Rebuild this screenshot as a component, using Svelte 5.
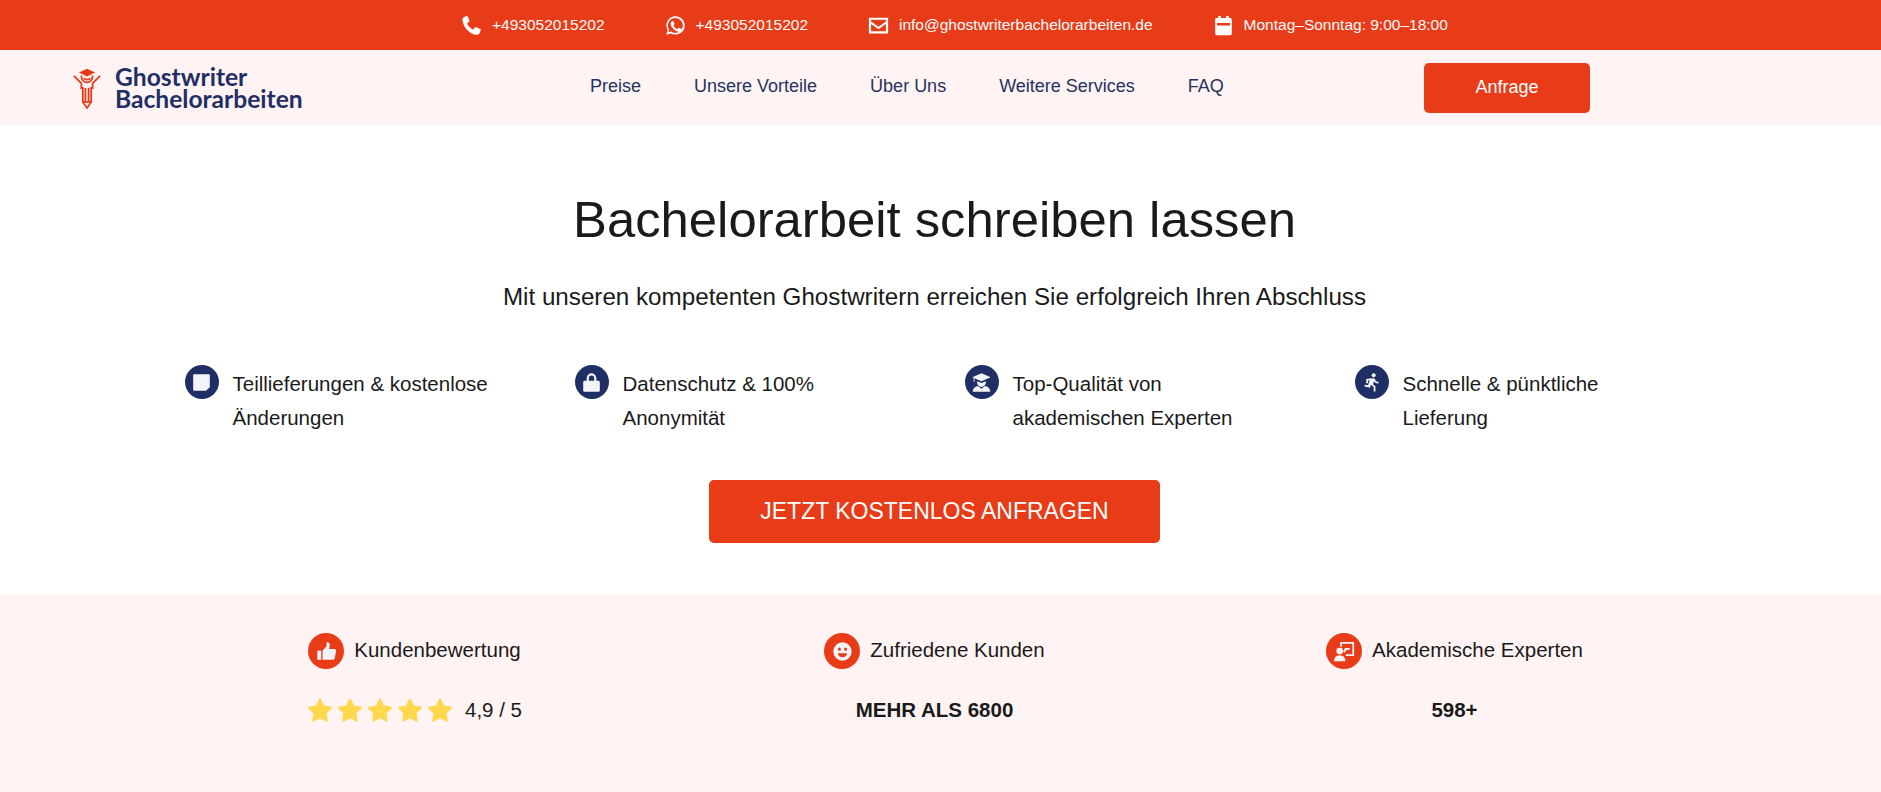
<script>
  const links = ['Preise', 'Unsere Vorteile', 'Über Uns', 'Weitere Services', 'FAQ'];
</script>

<div class="topbar">
  <div class="contact">
    <svg viewBox="0 0 24 24"><path d="M6.600 1 3 2.500C1.500 3.500 1.500 6 2 8c1.500 6.500 7.500 13 14 14.500 2 .5 4 0 5-1.500l1.500-3.500c.2-.6 0-1.200-.6-1.500l-4.600-2c-.5-.2-1.100-.1-1.500.4l-2 2.400c-3-1.500-5.600-4.200-7-7.100l2.400-2c.5-.4.600-1 .4-1.500l-2-4.600C7.800 1 7.200.8 6.600 1z" /></svg>
    <span>+493052015202</span>
  </div>
  <div class="contact">
    <svg viewBox="0 0 24 24"><path fill-rule="evenodd" d="M12 1.500A10.400 10.400 0 0 0 3 17.100L1.500 22.500l5.600-1.500A10.400 10.400 0 1 0 12 1.500zm0 2a8.400 8.400 0 1 1-4.500 15.500l-.4-.2-3 .8.800-2.900-.3-.4A8.400 8.400 0 0 1 12 3.500z" /><path d="M8.700 6.900c-.3 0-.7.100-1 .5-.4.400-1.200 1.200-1.200 2.800s1.200 3.200 1.400 3.400c.2.200 2.400 3.700 5.800 5 2.800 1.100 3.400.5 4-.1.400-.3 1-1.300 1.100-2 .1-.5 0-.7-.2-.8l-2.400-1.200c-.3-.1-.5-.1-.7.200l-1 1.200c-.2.200-.4.300-.7.100-1.900-.8-3.200-2.200-4-3.700-.2-.3 0-.5.100-.6l.8-1.100c.1-.2.100-.4 0-.6L9.600 7.500c-.3-.6-.6-.6-.9-.6z" /></svg>
    <span>+493052015202</span>
  </div>
  <div class="contact">
    <svg viewBox="0 0 24 24"><path fill-rule="evenodd" d="M1 3h22v18H1zm2.500 2.500v1.800l8.500 6 8.500-6V5.500zm17 4.800-8.500 6-8.500-6v8.200h17z" /></svg>
    <span>info@ghostwriterbachelorarbeiten.de</span>
  </div>
  <div class="contact">
    <svg viewBox="0 0 24 24"><path fill-rule="evenodd" d="M6 1h3v2.500h6V1h3v2.500h1.500c1 0 2 1 2 2V21c0 1-1 2-2 2h-15c-1 0-2-1-2-2V5.500c0-1 1-2 2-2H6zM4.500 9v3h15V9z" /></svg>
    <span>Montag–Sonntag: 9:00–18:00</span>
  </div>
</div>

<header class="nav">
  <div class="logo">
    <svg class="logo-mark" viewBox="0 0 30 44" fill="none" stroke="#e83b18" stroke-width="1.900">
      <path d="M1 9 9 17v5h1.500v15L15 43.500 19.500 37V22H21v-5l8-8" />
      <path d="M9 8.500c0 4.500 2.500 7.500 6 7.500s6-3 6-7.500" />
      <path d="M11.500 11.500c1.500 2 5.500 2 7 0" />
      <path d="M13.300 22v15M16.700 22v15M10.500 36.500c3 1 6 1 9 0" />
      <path d="M8.500 5.500 15 2.500l6.500 3-6.500 3z" fill="#e83b18" />
    </svg>
    <div class="logo-text">Ghostwriter<br />Bachelorarbeiten</div>
  </div>
  <nav class="links">
    {#each links as link}
      <span>{link}</span>
    {/each}
  </nav>
  <button class="nav-btn">Anfrage</button>
</header>

<main class="main">
  <section class="hero">
    <h1>Bachelorarbeit schreiben lassen</h1>
    <p class="sub">Mit unseren kompetenten Ghostwritern erreichen Sie erfolgreich Ihren Abschluss</p>

    <div class="features">
      <div class="feature">
        <span class="badge navy">
          <svg viewBox="0 0 24 24"><path d="M4 2.500h16c1 0 1.500.5 1.500 1.500v13.500L17 21.500H4c-1 0-1.500-.5-1.500-1.500V4c0-1 .5-1.500 1.500-1.500z" /></svg>
        </span>
        <p>Teillieferungen &amp; kostenlose Änderungen</p>
      </div>
      <div class="feature">
        <span class="badge navy">
          <svg viewBox="0 0 24 24"><path fill-rule="evenodd" d="M12 1.500a5.500 5.500 0 0 0-5.500 5.500v3H4.500C3.200 10 2.500 10.700 2.500 12v9c0 1 .7 1.500 2 1.500h15c1.300 0 2-.5 2-1.500v-9c0-1.300-.7-2-2-2h-2V7A5.500 5.500 0 0 0 12 1.500zM12 4a3 3 0 0 1 3 3v3H9V7a3 3 0 0 1 3-3z" /></svg>
        </span>
        <p>Datenschutz &amp; 100% Anonymität</p>
      </div>
      <div class="feature">
        <span class="badge navy">
          <svg viewBox="0 0 24 24"><path d="M12 1.500 22.500 6 12 10.500 4 7v4.500H3V6.500L1.500 6z" /><path d="M7 10.500 12 12.500l5-2v1.500a5 5 0 0 1-10 0z" /><path d="M2 22.500c0-4 3-6 6-6.500l4 3 4-3c3 .5 6 2.500 6 6.500z" /></svg>
        </span>
        <p>Top-Qualität von akademischen Experten</p>
      </div>
      <div class="feature">
        <span class="badge navy">
          <svg viewBox="0 0 24 24"><circle cx="14.500" cy="3.800" r="2.300" /><path d="M10 7.500 14 7c.8 0 1.400.3 1.800 1l1.400 2.500 3 1-.6 1.800-3.800-1.200-1-1.500-1 3.400 2.700 2.200v6h-2v-5l-3.200-2.500-1 3.300L4 16.500l.4-2 3.700.7 1.700-6-1.800.7v3H6V8z" /></svg>
        </span>
        <p>Schnelle &amp; pünktliche Lieferung</p>
      </div>
    </div>

    <button class="cta">JETZT KOSTENLOS ANFRAGEN</button>
  </section>
</main>

<section class="stats">
  <div class="stats-grid">
    <div class="stat">
      <div class="stat-head">
        <span class="badge red">
          <svg viewBox="0 0 24 24"><path d="M1.500 11h4.500v10.500H1.500z" /><path d="M7.500 11 12 6V1.500c2.200-.7 3.800.8 3.800 3 0 1.500-.5 3-1 4.500h6.400c1.200 0 2 1 1.800 2.200l-1.500 8.300c-.2 1-1 2-2 2H7.500z" /></svg>
        </span>
        <span class="label">Kundenbewertung</span>
      </div>
      <div class="stat-value rating">
        <div class="stars">
          {#each [0, 1, 2, 3, 4] as s (s)}
            <svg viewBox="0 0 24 24"><path d="M12 1.500c.4 0 .7.200.9.600l2.800 5.800 6.300.9c.9.100 1.200 1.200.6 1.800l-4.600 4.500 1.100 6.400c.2.900-.8 1.600-1.600 1.100L12 19.700l-5.600 3c-.8.400-1.800-.2-1.600-1.100l1.100-6.400-4.600-4.500c-.6-.6-.3-1.700.6-1.800l6.300-.9 2.800-5.800c.2-.4.500-.6 1-.6z" /></svg>
          {/each}
        </div>
        <span class="score">4,9 / 5</span>
      </div>
    </div>
    <div class="stat">
      <div class="stat-head">
        <span class="badge red">
          <svg viewBox="0 0 24 24"><path fill-rule="evenodd" d="M12 1.500a10.500 10.500 0 1 0 0 21 10.500 10.500 0 0 0 0-21zM8.500 7.500a1.800 1.800 0 1 1 0 3.600 1.800 1.800 0 0 1 0-3.600zm7 0a1.800 1.800 0 1 1 0 3.600 1.800 1.800 0 0 1 0-3.600zM6.500 14h11c-.6 2.800-3 4.500-5.500 4.500S7.100 16.800 6.500 14z" /></svg>
        </span>
        <span class="label">Zufriedene Kunden</span>
      </div>
      <div class="stat-value bold">MEHR ALS 6800</div>
    </div>
    <div class="stat">
      <div class="stat-head">
        <span class="badge red">
          <svg viewBox="0 0 24 24"><path d="M7 1h16v16H13.500v-2H21V3H9v3.500H7z" /><path d="M12.500 8H18v2h-3.200L12 13.500 10.500 12z" /><circle cx="6.500" cy="11.500" r="3.800" /><path d="M0 23c0-4.500 2.500-6.500 6.500-6.500s6.500 2 6.500 6.500z" /></svg>
        </span>
        <span class="label">Akademische Experten</span>
      </div>
      <div class="stat-value bold">598+</div>
    </div>
  </div>
</section>

<style>
  :global(body) {
    margin: 0;
    background: #fff;
    font-family: "Liberation Sans", Arial, sans-serif;
    color: #1a1a1a;
  }

  .topbar {
    height: 50px;
    background: #e83b18;
    color: #fff;
    display: flex;
    align-items: center;
    padding-left: 461px;
    font-size: 15.500px;
  }

  .contact {
    display: flex;
    align-items: center;
    gap: 10px;
    margin-right: 60px;
  }

  .contact svg {
    width: 21px;
    height: 21px;
    fill: #fff;
  }

  .nav {
    height: 75px;
    background: #fff3f3;
    display: flex;
    align-items: center;
    padding-left: 73px;
  }

  .logo {
    width: 517px;
    display: flex;
    align-items: center;
    gap: 14px;
  }

  .logo-mark {
    width: 28px;
    height: 44px;
  }

  .logo-text {
    font-family: Lato, sans-serif;
    font-weight: 700;
    font-size: 24.600px;
    line-height: 22px;
    color: #1f2f66;
  }

  .links {
    width: 834px;
    display: flex;
    gap: 53px;
    font-size: 18px;
    color: #25345f;
    margin-top: -2px;
  }

  .nav-btn {
    width: 166px;
    height: 50px;
    border: none;
    border-radius: 5px;
    background: #e83b18;
    color: #fff;
    font: 18px "Liberation Sans", Arial, sans-serif;
  }

  .main {
    padding-right: 12px;
  }

  .hero {
    height: 469px;
    display: flex;
    flex-direction: column;
    align-items: center;
  }

  h1 {
    margin: 62px 0 0;
    font-size: 50.800px;
    font-weight: 400;
    line-height: 66px;
  }

  .sub {
    margin: 28px 0 0;
    font-size: 24.200px;
    line-height: 32px;
  }

  .features {
    width: 1560px;
    margin-top: 52px;
    display: grid;
    grid-template-columns: repeat(4, 1fr);
  }

  .feature {
    display: flex;
    gap: 14px;
    padding-left: 30px;
  }

  .feature p {
    margin: 2px 0 0;
    width: 270px;
    font-size: 20.500px;
    line-height: 34px;
  }

  .badge {
    flex: none;
    width: 34px;
    height: 34px;
    border-radius: 50%;
    display: flex;
    align-items: center;
    justify-content: center;
  }

  .badge svg {
    width: 21px;
    height: 21px;
    fill: #f3f4f8;
  }

  .navy {
    background: #1f2f66;
  }

  .red {
    width: 36px;
    height: 36px;
    background: #e83b18;
  }

  .cta {
    margin-top: 45px;
    width: 451px;
    height: 63px;
    border: none;
    border-radius: 5px;
    background: #e83b18;
    color: #fff;
    font: 23px "Liberation Sans", Arial, sans-serif;
  }

  .stats {
    height: 198px;
    background: #fff3f3;
    padding-right: 12px;
    display: flex;
    justify-content: center;
  }

  .stats-grid {
    width: 1560px;
    padding-top: 39px;
    display: grid;
    grid-template-columns: repeat(3, 1fr);
    align-items: start;
  }

  .stat {
    display: flex;
    flex-direction: column;
    align-items: center;
  }

  .stat-head {
    display: flex;
    align-items: center;
    gap: 10px;
    font-size: 20.500px;
  }

  .label {
    margin-top: -2px;
  }

  .stat-value {
    margin-top: 25px;
    height: 32px;
    display: flex;
    align-items: center;
  }

  .bold {
    font-size: 20.500px;
    font-weight: 700;
  }

  .stars {
    display: flex;
    gap: 4px;
  }

  .stars svg {
    width: 26px;
    height: 26px;
    fill: #ffd84d;
  }

  .score {
    margin-left: 12px;
    font-size: 20.500px;
  }
</style>
